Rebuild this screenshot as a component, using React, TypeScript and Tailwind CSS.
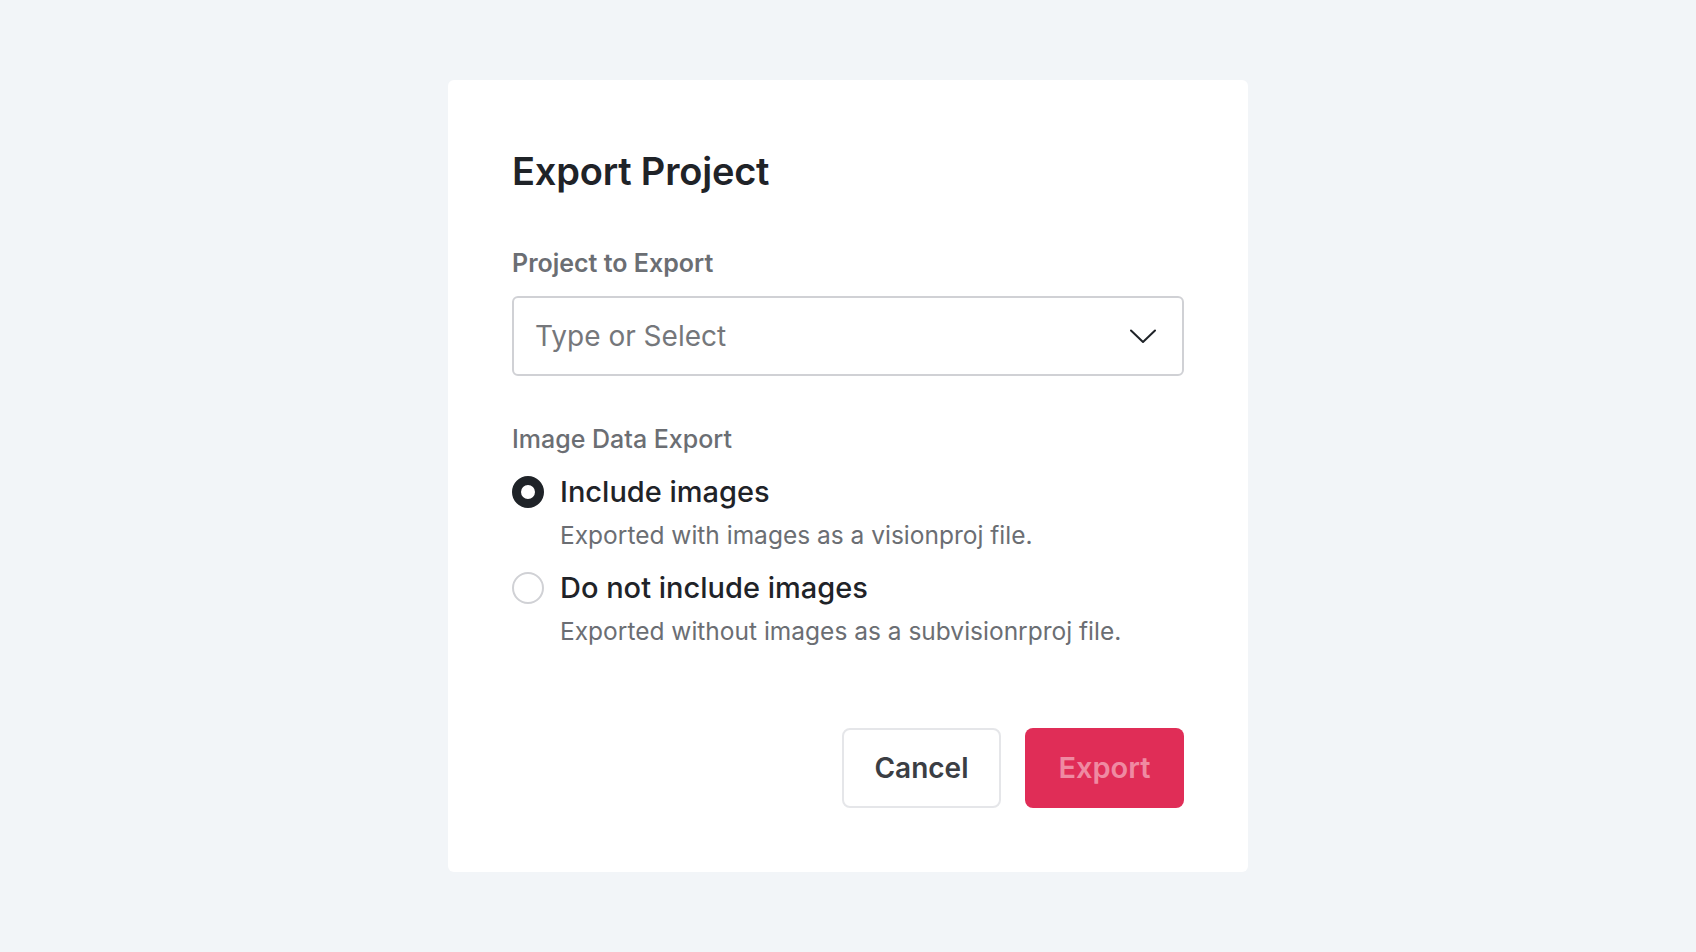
import React, { useState } from 'react';

const options = [
  { id: 'include', title: 'Include images', description: 'Exported with images as a visionproj file.' },
  { id: 'exclude', title: 'Do not include images', description: 'Exported without images as a subvisionrproj file.' },
];

const App: React.FC = () => {
  const [choice, setChoice] = useState('include');

  return (
    <div
      className="min-h-screen bg-[#f2f5f8] flex justify-center pt-20"
      style={{ fontFamily: 'Inter, "Noto Sans", sans-serif' }}
    >
      <div className="w-[800px] h-[792px] bg-white rounded-md px-16 pt-[68px] pb-16 flex flex-col">
        {/* Title */}
        <h1 className="text-[38px] leading-[46px] font-semibold text-[#1f2328] tracking-[-0.2px]">Export Project</h1>

        {/* Project select */}
        <label className="mt-[54px] text-[25px] leading-[30px] font-semibold text-[#6b6e73]">Project to Export</label>
        <div className="mt-[18px] h-[80px] border-2 border-[#d0d1d5] rounded-md flex items-center justify-between pl-[21px] pr-[26px]">
          <span className="text-[28px] text-[#75777b] font-normal">Type or Select</span>
          <svg width="26" height="15" viewBox="0 0 26 15" fill="none">
            <path d="M1 1.5 L13 13 L25 1.5" stroke="#1f2328" strokeWidth="2" strokeLinecap="round" strokeLinejoin="round" />
          </svg>
        </div>

        {/* Image data export */}
        <div className="mt-[48px] text-[25px] leading-[30px] font-medium text-[#6b6e73]">Image Data Export</div>
        <div className="mt-[18px] flex flex-col gap-[15px]">
          {options.map((o) => {
            const selected = choice === o.id;
            return (
              <button key={o.id} onClick={() => setChoice(o.id)} className="flex flex-col items-start text-left">
                <div className="flex items-center gap-[16px] h-[40px]">
                  <span
                    className={
                      selected
                        ? 'w-[32px] h-[32px] rounded-full border-[9px] border-[#1f2328] bg-white'
                        : 'w-[32px] h-[32px] rounded-full border-2 border-[#d0d1d5] bg-white'
                    }
                  />
                  <span className="text-[29px] font-medium text-[#1f2328]">{o.title}</span>
                </div>
                <span className="ml-[48px] mt-[5px] text-[24.5px] leading-[36px] text-[#6b6e73]">{o.description}</span>
              </button>
            );
          })}
        </div>

        {/* Actions */}
        <div className="mt-auto flex justify-end gap-[24px]">
          <button className="w-[159px] h-[80px] border-2 border-[#e5e6e9] rounded-lg bg-white text-[28px] font-semibold text-[#3b3e44]">
            Cancel
          </button>
          <button className="w-[159px] h-[80px] rounded-lg bg-[#e02d57] text-[29px] font-semibold text-[#ef8aa2]">
            Export
          </button>
        </div>
      </div>
    </div>
  );
};

export default App;
